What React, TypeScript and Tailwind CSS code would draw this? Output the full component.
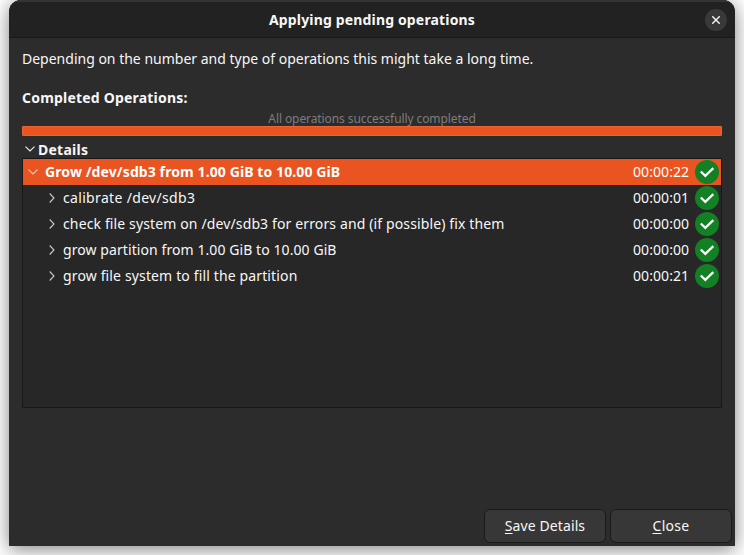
import React from "react";

type Operation = {
  label: string;
  time: string;
  tracking: string;
};

const steps: Operation[] = [
  { label: "calibrate /dev/sdb3", time: "00:00:01", tracking: "tracking-[0.33px]" },
  { label: "check file system on /dev/sdb3 for errors and (if possible) fix them", time: "00:00:00", tracking: "tracking-[0.13px]" },
  { label: "grow partition from 1.00 GiB to 10.00 GiB", time: "00:00:00", tracking: "tracking-[0.08px]" },
  { label: "grow file system to fill the partition", time: "00:00:21", tracking: "tracking-[0.14px]" },
];

function ChevronDown({ className }: { className: string }) {
  return (
    <svg className={className} width="10" height="6" viewBox="0 0 10 6" fill="none" stroke="currentColor" strokeWidth="1.1">
      <path d="M0.5 0.7 L5 5 L9.5 0.7" />
    </svg>
  );
}

function ChevronRight() {
  return (
    <svg className="text-[#c8c8c8]" width="6" height="10" viewBox="0 0 6 10" fill="none" stroke="currentColor" strokeWidth="1.1">
      <path d="M0.7 0.5 L5 5 L0.7 9.5" />
    </svg>
  );
}

function Success() {
  return (
    <svg width="24" height="24" viewBox="0 0 24 24" className="shrink-0">
      <circle cx="12" cy="12" r="12" fill="#128023" />
      <path d="M5.8 11.5 L10.3 15.9 L18.3 8.1" fill="none" stroke="#fff" strokeWidth="2.2" />
    </svg>
  );
}

function Time({ value }: { value: string }) {
  return <span className="ml-auto mr-[6px] w-[56px] whitespace-nowrap tracking-[0.08px]">{value}</span>;
}

export default function App() {
  return (
    <div className="h-[555px] w-[744px] overflow-hidden bg-white px-[9px] font-['Noto_Sans','Open_Sans',sans-serif] text-[14px] leading-[20px] text-[#f7f7f7]">
      <div className="flex h-[546px] w-[726px] flex-col overflow-hidden rounded-t-[12px] bg-[#2c2c2c] shadow-[0_3px_19px_rgba(0,0,0,0.5)]">
        <header className="grid h-[38px] shrink-0 grid-cols-[40px_1fr_40px] items-center border-t-2 border-b border-t-[#343434] border-b-[#191919] bg-[#222222]">
          <span />
          <h1 className="text-center font-bold whitespace-nowrap tracking-[0.16px]">Applying pending operations</h1>
          <button className="ml-[10px] flex size-[22px] items-center justify-center rounded-full bg-[#393939]">
            <svg width="8" height="8" viewBox="0 0 8 8" stroke="#f7f7f7" strokeWidth="1.4">
              <path d="M0.3 0.3 L7.7 7.7 M7.7 0.3 L0.3 7.7" />
            </svg>
          </button>
        </header>

        <main className="flex flex-1 flex-col px-[13px] pt-[11px]">
          <p className="whitespace-nowrap">Depending on the number and type of operations this might take a long time.</p>
          <h2 className="mt-[19px] font-bold whitespace-nowrap tracking-[0.2px]">Completed Operations:</h2>
          <p className="mt-[3px] h-[15px] text-center text-[12px] leading-[15px] whitespace-nowrap tracking-[-0.09px] text-[#7c7c7c]">
            All operations successfully completed
          </p>
          <div className="h-[10px] rounded-[1px] border border-[#ec6336] bg-[#e95420]" />
          <div className="mt-[3px] flex h-[19px] items-center pl-[3px]">
            <ChevronDown className="text-[#f0f0f0]" />
            <span className="ml-[3px] pt-[2px] font-bold tracking-[0.25px]">Details</span>
          </div>

          <section className="h-[250px] border border-[#181818] bg-[#272727]">
            <div className="flex h-[26px] items-center bg-[#e95420] pr-[2px] pl-[5px] text-white">
              <ChevronDown className="text-[#f8cdbd]" />
              <span className="ml-[7px] font-bold whitespace-nowrap tracking-[0.1px]">Grow /dev/sdb3 from 1.00 GiB to 10.00 GiB</span>
              <Time value="00:00:22" />
              <Success />
            </div>
            {steps.map((step) => (
              <div key={step.label} className="flex h-[26px] items-center pr-[2px] pl-[25.5px]">
                <ChevronRight />
                <span className={`ml-[8.5px] whitespace-nowrap ${step.tracking}`}>{step.label}</span>
                <Time value={step.time} />
                <Success />
              </div>
            ))}
          </section>
        </main>

        <footer className="flex justify-end gap-[4px] pr-[3px] pb-[3px]">
          <button className="h-[34px] w-[122px] rounded-[6px] border border-[#1a1a1a] bg-[#373737] tracking-[0.1px]">
            <span className="underline underline-offset-2">S</span>ave Details
          </button>
          <button className="h-[34px] w-[122px] rounded-[6px] border border-[#1a1a1a] bg-[#373737] tracking-[0.3px]">
            <span className="underline underline-offset-2">C</span>lose
          </button>
        </footer>
      </div>
    </div>
  );
}
